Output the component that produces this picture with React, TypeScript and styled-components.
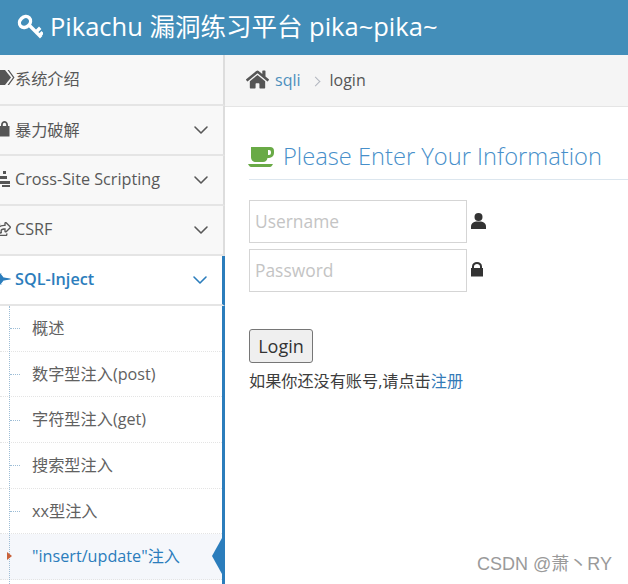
import React from 'react'
import styled, { createGlobalStyle } from 'styled-components'
import { ChevronDown } from 'lucide-react'
import { FaFighterJet, FaHome, FaRegShareSquare } from 'react-icons/fa'

const FONT = '"Open Sans", "Noto Sans CJK SC", sans-serif'

const GlobalStyle = createGlobalStyle`
  html, body {
    margin: 0;
    padding: 0;
    background: #fff;
    overflow: hidden;
  }
  * { box-sizing: border-box; }
`

const Page = styled.div`
  position: relative;
  width: 628px;
  height: 584px;
  overflow: hidden;
  font-family: ${FONT};
  font-size: 16.2px;
  color: #393939;
`
const Header = styled.header`
  height: 55px;
  background: #438eb9;
  color: #fff;
  display: flex;
  align-items: center;
  gap: 7px;
  padding: 0 0 6px 17px;
  font-size: 25.5px;
  white-space: nowrap;
`
const KeySvg = styled.svg`
  width: 26px;
  height: 26px;
  margin-top: 5px;
  flex: none;
`
const Body = styled.div`
  display: flex;
  height: 529px;
`
const Sidebar = styled.nav`
  width: 225px;
  flex: none;
  display: flex;
  flex-direction: column;
  background: #fff;
`
const TopItem = styled.div<{ $open?: boolean }>`
  height: 50px;
  flex: none;
  display: flex;
  align-items: center;
  padding: 0 10px 3px 0;
  background: ${(p) => (p.$open ? '#fff' : '#f8f8f8')};
  color: ${(p) => (p.$open ? '#2b7dbc' : '#585858')};
  font-weight: ${(p) => (p.$open ? 600 : 400)};
  border-bottom: 2px solid #e5e5e5;
  border-right: ${(p) => (p.$open ? '3px solid #2b7dbc' : '2px solid #ddd')};
  &:first-child {
    height: 51px;
  }
`
const ItemIcon = styled.span`
  width: 15px;
  height: 16px;
  display: flex;
  align-items: center;
  flex: none;
  font-size: 16px;
  overflow: hidden;
  svg {
    flex: none;
  }
`
const ClippedIcon = styled.span`
  display: flex;
  margin-left: -5px;
`
const ItemLabel = styled.span`
  flex: 1;
  white-space: nowrap;
`
const Chevron = styled(ChevronDown)`
  width: 24px;
  height: 24px;
  margin-top: 3px;
  stroke-width: 1.6;
`
const SubList = styled.ul`
  flex: 1;
  list-style: none;
  margin: 0;
  padding: 0;
  position: relative;
  border-right: 3px solid #2b7dbc;
  &::before {
    content: '';
    position: absolute;
    z-index: 1;
    left: 9px;
    top: 0;
    bottom: 0;
    border-left: 1px dotted #9dbdd6;
  }
`
const SubItem = styled.li<{ $active?: boolean }>`
  position: relative;
  height: 45.7px;
  display: flex;
  align-items: center;
  padding: 0 0 3px 32px;
  white-space: nowrap;
  color: ${(p) => (p.$active ? '#2b7dbc' : '#616161')};
  background: ${(p) => (p.$active ? '#f5f7fb' : '#fff')};
  border-bottom: 1px dotted #e4e4e4;
  &::before {
    content: '';
    position: absolute;
    left: 10px;
    top: 50%;
    width: 10px;
    border-top: 1px dotted #9dbdd6;
    display: ${(p) => (p.$active ? 'none' : 'block')};
  }
`
const ActiveMark = styled.span`
  position: absolute;
  z-index: 2;
  left: 7px;
  top: 50%;
  margin-top: -5px;
  border-left: 5px solid #c86139;
  border-top: 4px solid transparent;
  border-bottom: 4px solid transparent;
`
const ActiveArrow = styled.span`
  position: absolute;
  right: 0;
  top: 50%;
  margin-top: -19px;
  border-right: 10px solid #2b7dbc;
  border-top: 18px solid transparent;
  border-bottom: 18px solid transparent;
`
const Main = styled.main`
  flex: 1;
  min-width: 0;
`
const Breadcrumb = styled.div`
  height: 52px;
  background: #f5f5f5;
  border-bottom: 1px solid #e5e5e5;
  display: flex;
  align-items: center;
  padding: 0 0 2px 21px;
  font-size: 16px;
  color: #555;
`
const HomeIcon = styled(FaHome)`
  font-size: 23px;
  color: #555;
  margin-right: 6px;
`
const CrumbLink = styled.a`
  color: #4c8fbd;
`
const CrumbSep = styled.span`
  width: 7px;
  height: 7px;
  margin: 3px 11px 0 11px;
  border-top: 1.5px solid #b2b6bf;
  border-right: 1.5px solid #b2b6bf;
  transform: rotate(45deg);
`
const Content = styled.section`
  padding: 34px 0 0 24px;
`
const Title = styled.h4`
  margin: 0;
  height: 39px;
  display: flex;
  align-items: center;
  gap: 9px;
  padding-bottom: 9px;
  font-size: 23.7px;
  font-weight: 300;
  color: #478fca;
  border-bottom: 1px solid #dce6ee;
  white-space: nowrap;
`
const CupSvg = styled.svg`
  width: 26px;
  height: 20px;
  margin: 2px 0 0 -1px;
  flex: none;
  fill: #69aa46;
`
const Form = styled.form`
  padding-top: 20px;
`
const Field = styled.div`
  display: flex;
  align-items: center;
  gap: 4px;
  margin-bottom: 6px;
`
const Input = styled.input`
  width: 218px;
  height: 43px;
  padding: 0 5px 2px;
  border: 1px solid #d5d5d5;
  font-family: ${FONT};
  font-size: 17.4px;
  &::placeholder {
    color: #c4c4c4;
    opacity: 1;
  }
`
const FieldSvg = styled.svg`
  width: 15px;
  height: 16px;
  margin-top: -1px;
  fill: #333;
`
const LoginButton = styled.button`
  display: block;
  width: 64px;
  height: 34px;
  margin-top: 37px;
  padding: 0;
  border: 1px solid #767676;
  border-radius: 3px;
  background: #efefef;
  font-family: ${FONT};
  font-size: 18px;
  color: #333;
`
const Hint = styled.p`
  margin: 7px 0 0;
  font-size: 16.15px;
  line-height: 22px;
  color: #3d3d3d;
`
const HintLink = styled.a`
  color: #337ab7;
`
const Watermark = styled.div`
  position: absolute;
  right: 16px;
  bottom: 9px;
  font-family: "Liberation Sans", "Noto Sans CJK SC", sans-serif;
  font-size: 18px;
  color: #9a9a9a;
  white-space: nowrap;
`

const KeyIcon = () => (
  <KeySvg viewBox="0 0 26 26" fill="none" stroke="#fff" strokeWidth="3.4" strokeLinecap="square">
    <ellipse cx="8" cy="8" rx="6" ry="5" transform="rotate(-45 8 8)" />
    <path d="M13 12 L23 22 M19 18 L22 15 M22.5 21.5 L24.5 19.5" />
  </KeySvg>
)

const TagsIcon = () => (
  <svg width="15" height="16" viewBox="0 0 15 16" fill="#555">
    <path d="M0 0H5L11 7.5L5 15H0z" />
    <path d="M7.5 0H9L14.5 7.5L9 15H7.5L13 7.5z" />
  </svg>
)

const SideLockIcon = () => (
  <svg width="15" height="16" viewBox="0 0 15 16" fill="#555">
    <path d="M0 5H1V4C1 1.5 3 0 4.5 0S8 1.5 8 4V5H9.5V15.5H0zM2.8 5H6.2V4C6.2 2.6 5.4 1.8 4.5 1.8S2.8 2.6 2.8 4z" />
  </svg>
)

const StackIcon = () => (
  <svg width="15" height="16" viewBox="0 0 15 16" fill="#555">
    <rect x="3" y="0" width="3" height="3" />
    <rect x="0" y="5" width="6" height="3" />
    <rect x="3" y="5" width="4" height="3" />
    <rect x="0" y="10" width="10" height="3" />
    <rect x="2" y="14" width="8" height="2" />
  </svg>
)

const CupIcon = () => (
  <CupSvg viewBox="0 0 26 20">
    <path
      fillRule="evenodd"
      d="M3 0H22a4 4 0 0 1 4 4v2a5 5 0 0 1-5 5h-1.5c-.5 2.500-2 4-4.500 4H8c-3 0-5-2-5-5zM20 3v5h1a2 2 0 0 0 2-2V5a2 2 0 0 0-2-2z"
    />
    <path d="M0 17H25c-1 2-2 3-3 3H3c-1 0-2-1-3-3z" />
  </CupSvg>
)

const UserIcon = () => (
  <FieldSvg viewBox="0 0 15 16">
    <circle cx="7.5" cy="4" r="4" />
    <path d="M0 16V13.5C0 10.5 2.5 9 5 8.5H10C12.5 9 15 10.500 15 13.500V16z" />
  </FieldSvg>
)

const LockIcon = () => (
  <FieldSvg viewBox="0 0 15 16">
    <path d="M0 6H1V4.500C1 1.500 3.200 0 6 0S11 1.500 11 4.500V6H12V14.500H0zM3 6H9V4.500C9 3 7.600 2 6 2S3 3 3 4.500z" />
  </FieldSvg>
)

const topItems = [
  { label: '系统介绍', icon: <TagsIcon />, chevron: false },
  { label: '暴力破解', icon: <SideLockIcon />, chevron: true },
  { label: 'Cross-Site Scripting', icon: <StackIcon />, chevron: true },
  {
    label: 'CSRF',
    icon: (
      <ClippedIcon>
        <FaRegShareSquare />
      </ClippedIcon>
    ),
    chevron: true,
  },
]

const subItems = ['概述', '数字型注入(post)', '字符型注入(get)', '搜索型注入', 'xx型注入']

export default function App() {
  return (
    <Page>
      <GlobalStyle />
      <Header>
        <KeyIcon />
        <span>Pikachu 漏洞练习平台 pika~pika~</span>
      </Header>
      <Body>
        <Sidebar>
          {topItems.map((item) => (
            <TopItem key={item.label}>
              <ItemIcon>{item.icon}</ItemIcon>
              <ItemLabel>{item.label}</ItemLabel>
              {item.chevron && <Chevron />}
            </TopItem>
          ))}
          <TopItem $open>
            <ItemIcon>
              <ClippedIcon>
                <FaFighterJet />
              </ClippedIcon>
            </ItemIcon>
            <ItemLabel>SQL-Inject</ItemLabel>
            <Chevron />
          </TopItem>
          <SubList>
            {subItems.map((label) => (
              <SubItem key={label}>{label}</SubItem>
            ))}
            <SubItem $active>
              <ActiveMark />
              "insert/update"注入
              <ActiveArrow />
            </SubItem>
          </SubList>
        </Sidebar>
        <Main>
          <Breadcrumb>
            <HomeIcon />
            <CrumbLink>sqli</CrumbLink>
            <CrumbSep />
            <span>login</span>
          </Breadcrumb>
          <Content>
            <Title>
              <CupIcon />
              Please Enter Your Information
            </Title>
            <Form>
              <Field>
                <Input placeholder="Username" />
                <UserIcon />
              </Field>
              <Field>
                <Input placeholder="Password" />
                <LockIcon />
              </Field>
              <LoginButton type="button">Login</LoginButton>
              <Hint>
                如果你还没有账号,请点击<HintLink>注册</HintLink>
              </Hint>
            </Form>
          </Content>
        </Main>
      </Body>
      <Watermark>CSDN @萧丶RY</Watermark>
    </Page>
  )
}
